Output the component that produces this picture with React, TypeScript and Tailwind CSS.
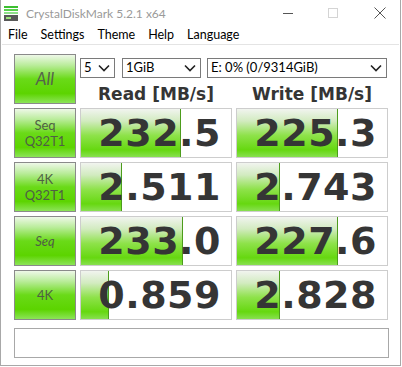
import React from "react";

type Row = { label: string[]; read: string; write: string; readPct: number; writePct: number; italic?: boolean };

const rows: Row[] = [
  { label: ["Seq", "Q32T1"], read: "232.5", write: "225.3", readPct: 100, writePct: 101 },
  { label: ["4K", "Q32T1"], read: "2.511", write: "2.743", readPct: 41, writePct: 43 },
  { label: ["Seq"], read: "233.0", write: "227.6", readPct: 102, writePct: 101, italic: true },
  { label: ["4K"], read: "0.859", write: "2.828", readPct: 28, writePct: 43 },
];

const btnBg =
  "bg-[linear-gradient(to_bottom,#eef8e8_0%,#b8ec98_22%,#6ada18_50%,#5cd400_80%,#8ce458_100%)]";
const fillBg =
  "bg-[linear-gradient(to_bottom,#f1f4ef_0%,#d2ebc0_25%,#8ee24a_55%,#66d810_85%,#88e050_100%)]";

const Chevron = () => (
  <svg width="12" height="8" viewBox="0 0 12 8" className="shrink-0">
    <path d="M1 1.5 L6 6.5 L11 1.5" fill="none" stroke="#222" strokeWidth="1.6" />
  </svg>
);

const Select = ({ text, w }: { text: string; w: string }) => (
  <div className={`${w} h-[20px] border border-[#7a7a7a] bg-white flex items-center justify-between pl-[3px] pr-[4px] text-[13px] text-black font-['Lato',sans-serif]`}>
    <span>{text}</span>
    <Chevron />
  </div>
);

const ValueCell = ({ value, width }: { value: string; width: number }) => (
  <div className="relative h-[50px] border border-[#cdcdcd] bg-white overflow-hidden">
    <div
      className={`absolute left-0 top-0 bottom-0 ${fillBg} border-r border-[#4c9c1c]`}
      style={{ width }}
    />
    <div className="relative h-full flex items-center justify-end pr-[10px] font-['DejaVu_Sans',sans-serif] font-bold text-[38px] leading-none text-[#353535] tracking-[0.5px]">
      {value}
    </div>
  </div>
);

export default function App() {
  return (
    <div className="w-[402px] h-[367px] bg-white font-['Lato',sans-serif] overflow-hidden">
      <div className="w-[401px] h-[366px] border-l border-r border-b border-[#a8a8a8] flex flex-col">
        {/* title bar */}
        <div className="h-[27px] flex items-center relative">
          <svg width="16" height="16" viewBox="0 0 16 16" className="ml-[3px] mt-[1px]">
            <rect x="0" y="0" width="14" height="2" fill="#3cbf30" />
            <rect x="0" y="3" width="14" height="2" fill="#57d14a" />
            <rect x="0" y="6" width="14" height="2" fill="#8fe08a" />
            <rect x="0" y="9" width="14" height="6" fill="#585858" />
            <rect x="2" y="11" width="5" height="2" fill="#9be37a" />
          </svg>
          <span className="ml-[6px] text-[12px] text-[#9a9a9a]">CrystalDiskMark 5.2.1 x64</span>
          <div className="absolute left-[282px] top-[13px] w-[10px] h-px bg-[#555]" />
          <div className="absolute left-[327px] top-[8px] w-[10px] h-[10px] border border-[#d4d4d4]" />
          <svg width="12" height="12" viewBox="0 0 12 12" className="absolute left-[373px] top-[7px]">
            <path d="M0.5 0.5 L11.5 11.5 M11.5 0.5 L0.5 11.5" stroke="#555" strokeWidth="1" />
          </svg>
        </div>
        {/* menu */}
        <div className="h-[17px] flex items-center gap-[13px] pl-[7px] text-[12.5px] text-black leading-none">
          <span>File</span>
          <span>Settings</span>
          <span>Theme</span>
          <span>Help</span>
          <span>Language</span>
        </div>
        <div className="h-px bg-[#e4e4e4] mx-[1px]" />

        <div className="pl-[13px] pt-[9px]">
          {/* top row */}
          <div className="flex gap-[4px]">
            <div className={`w-[62px] h-[50px] border border-[#8a8a8a] ${btnBg} flex items-center justify-center text-[17px] italic text-[#55644c]`}>
              All
            </div>
            <div className="w-[308px] flex flex-col">
              <div className="flex mt-[4px]">
                <Select text="5" w="w-[35px]" />
                <div className="w-[7px]" />
                <Select text="1GiB" w="w-[79px]" />
                <div className="w-[6px]" />
                <Select text="E: 0% (0/9314GiB)" w="w-[180px]" />
              </div>
              <div className="grid grid-cols-2 gap-[4px] mt-[6px] font-['DejaVu_Sans',sans-serif] font-bold text-[17px] leading-[20px] text-[#353535] text-center">
                <span>Read [MB/s]</span>
                <span>Write [MB/s]</span>
              </div>
            </div>
          </div>

          {/* result rows */}
          <div className="grid grid-cols-[62px_152px_152px] gap-[4px] mt-[4px]">
            {rows.map((r) => (
              <React.Fragment key={r.label.join(" ") + r.read}>
                <div className={`h-[50px] border border-[#8a8a8a] ${btnBg} flex flex-col items-center justify-center text-[13px] leading-[16px] text-[#4f5f45] ${r.italic ? "italic" : ""}`}>
                  {r.label.map((l) => (
                    <span key={l}>{l}</span>
                  ))}
                </div>
                <ValueCell value={r.read} width={r.readPct} />
                <ValueCell value={r.write} width={r.writePct} />
              </React.Fragment>
            ))}
          </div>

          {/* comment */}
          <div className="mt-[8px] w-[375px] h-[30px] border border-[#a8a8a8] bg-white" />
        </div>
      </div>
    </div>
  );
}
